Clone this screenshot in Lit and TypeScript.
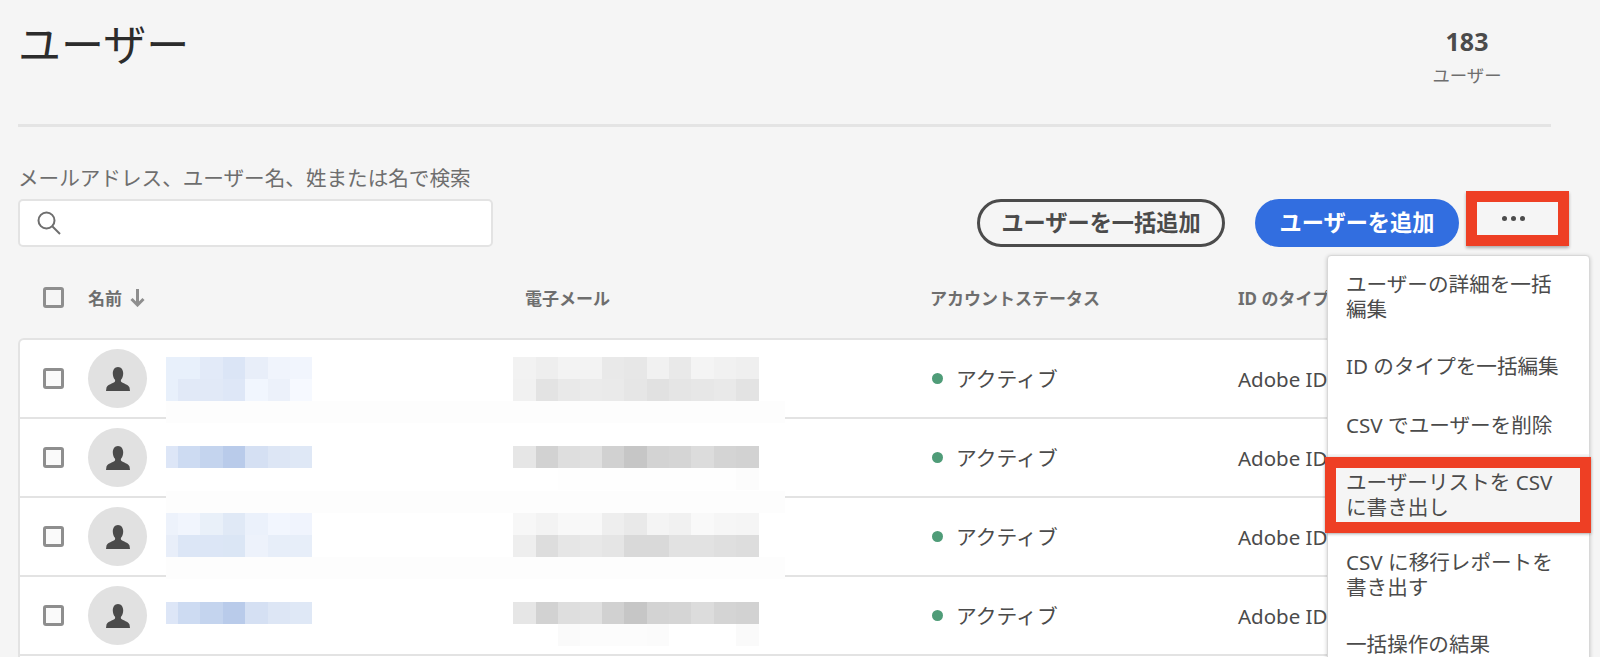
import { LitElement, html, css, svg } from "lit";
import { customElement } from "lit/decorators.js";

type Row = { offset: number; name: string[][]; mail: string[][] };

const NAME_W = [12, 22, 23, 22, 23, 22, 22];
const MAIL_W = [23, 22, 22, 22, 22, 23, 22, 22, 23, 22, 23];

const rows: Row[] = [
  {
    offset: 17,
    name: [
      ["e8f0fb", "e8f0fb", "e2eaf8", "dbe5f6", "e8eef9", "f0f4fc", "f1f5fd"],
      ["e8f0fb", "e1e9f7", "e1e9f7", "dee7f7", "f1f6fe", "ecf1fa", "f6f9ff"],
    ],
    mail: [
      ["f2f2f2", "eeeeee", "f3f3f3", "f3f3f3", "e9e9e9", "e7e7e7", "f1f1f1", "e9e9e9", "f4f4f4", "f1f1f1", "efefef"],
      ["f1f1f1", "e3e3e3", "e9e9e9", "ebebeb", "eaeaea", "e6e6e6", "e1e1e1", "e5e5e5", "e7e7e7", "e9e9e9", "e3e3e3"],
    ],
  },
  {
    offset: 27,
    name: [["dde6f7", "cddbf2", "c4d4ee", "b9cbea", "d5e0f3", "dde6f5", "dfe8f6"]],
    mail: [
      ["e6e6e6", "d2d2d2", "dedede", "e0e0e0", "d1d1d1", "c6c6c6", "d3d3d3", "d5d5d5", "dcdcdc", "d4d4d4", "d2d2d2"],
      ["ffffff", "ffffff", "fefefe", "fefefe", "fefefe", "fefefe", "fefefe", "fefefe", "fefefe", "fefefe", "fcfcfc"],
    ],
  },
  {
    offset: 15,
    name: [
      ["edf2fb", "f1f5fd", "e9f0f9", "e0e9f6", "ebf1fb", "f2f6fe", "f0f4fd"],
      ["e8eef9", "dce6f6", "dce6f6", "dbe6f5", "edf2fb", "e7eef9", "e7eef9"],
    ],
    mail: [
      ["f7f7f7", "f3f3f3", "f8f8f8", "f8f8f8", "eeeeee", "e9e9e9", "f4f4f4", "f1f1f1", "f9f9f9", "f6f6f6", "f5f5f5"],
      ["eeeeee", "dddddd", "e6e6e6", "e8e8e8", "e5e5e5", "d9d9d9", "d9d9d9", "e2e2e2", "e2e2e2", "dfdfdf", "dddddd"],
    ],
  },
  {
    offset: 25,
    name: [["dde6f7", "cddbf2", "c4d4ee", "b9cbea", "d5e0f3", "dde6f5", "dfe8f6"]],
    mail: [
      ["e6e6e6", "d2d2d2", "dedede", "e0e0e0", "d1d1d1", "c6c6c6", "d3d3d3", "d5d5d5", "dcdcdc", "d4d4d4", "d2d2d2"],
      ["ffffff", "ffffff", "fafafa", "fcfcfc", "fcfcfc", "fcfcfc", "fbfbfb", "ffffff", "ffffff", "ffffff", "fafafa"],
    ],
  },
];

const BANDS = [
  { top: 401, height: 22 },
  { top: 491, height: 22 },
  { top: 557, height: 22 },
];

const person = svg`<path d="M12 0c-3.2 0-5.200 2.800-5.200 6.400 0 2.600.9 4.700 2 6.200.5.700.5 1.900-.2 2.500C7 16.600 1.600 17.600.5 20.600L0 24h24l-.5-3.400c-1.100-3-6.500-4-8.100-5.500-.7-.6-.7-1.800-.2-2.500 1.100-1.500 2-3.600 2-6.200C17.200 2.800 15.200 0 12 0z"/>`;

@customElement("app-root")
export class AppRoot extends LitElement {
  static styles = css`
    :host {
      display: block;
      position: relative;
      width: 1600px;
      height: 657px;
      overflow: hidden;
      background: #f5f5f5;
      color: #4b4b4b;
      font-family: "Noto Sans", "Noto Sans CJK JP", sans-serif;
    }
    .page {
      display: flex;
      flex-direction: column;
      padding-left: 18px;
    }
    .head {
      width: 1533px;
      height: 124px;
      display: flex;
      justify-content: space-between;
      box-sizing: border-box;
    }
    h1 {
      margin: 16px 0 0;
      font-size: 43px;
      line-height: 58px;
      font-weight: 400;
      color: #2c2c2c;
    }
    .stat {
      width: 70px;
      margin-right: 49px;
      padding-top: 25px;
      text-align: center;
    }
    .stat b {
      display: block;
      font-size: 25px;
      line-height: 32px;
      font-weight: 700;
    }
    .stat span {
      display: block;
      margin-top: 6px;
      font-size: 17.400px;
      line-height: 24px;
      color: #6e6e6e;
      white-space: nowrap;
    }
    .rule {
      width: 1533px;
      height: 3px;
      background: #e4e4e4;
    }
    .toolbar {
      display: flex;
      align-items: flex-end;
      padding: 39px 31px 0 0;
    }
    .search {
      width: 475px;
    }
    .search label {
      display: block;
      margin-bottom: 9px;
      font-size: 20.600px;
      line-height: 24px;
      color: #6e6e6e;
      white-space: nowrap;
    }
    .input {
      box-sizing: border-box;
      height: 48px;
      display: flex;
      align-items: center;
      padding-left: 17px;
      background: #fff;
      border: 2px solid #e3e3e3;
      border-radius: 5px;
    }
    .input svg {
      width: 24px;
      height: 24px;
      fill: none;
      stroke: #6e6e6e;
      stroke-width: 2;
    }
    .actions {
      margin-left: auto;
      display: flex;
      align-items: flex-end;
    }
    .btn {
      box-sizing: border-box;
      height: 48px;
      border-radius: 24px;
      font-family: inherit;
      font-size: 22.200px;
      font-weight: 700;
      line-height: 1;
      padding: 0;
      white-space: nowrap;
    }
    .btn.outline {
      width: 248px;
      border: 3px solid #4b4b4b;
      background: transparent;
      color: #4b4b4b;
    }
    .btn.primary {
      width: 204px;
      margin-left: 30px;
      border: 0;
      background: #326ee0;
      color: #fff;
    }
    .more {
      box-sizing: border-box;
      width: 103px;
      height: 55px;
      margin: 0 0 1px 7px;
      padding-right: 8px;
      display: flex;
      align-items: center;
      justify-content: center;
      gap: 4px;
      border: 11px solid #ee3f24;
      box-shadow: 0 2px 3px rgba(0, 0, 0, 0.3);
    }
    .more i {
      width: 5px;
      height: 5px;
      border-radius: 50%;
      background: #4b4b4b;
    }
    .cols {
      display: grid;
      grid-template-columns: 45px 437px 405px 308px 1fr;
      align-items: center;
    }
    .thead {
      box-sizing: border-box;
      height: 91px;
      padding: 10px 0 0 25px;
      width: 1533px;
      font-size: 17px;
      font-weight: 700;
      color: #6e6e6e;
      white-space: nowrap;
    }
    .sort {
      display: flex;
      align-items: center;
      gap: 8px;
    }
    .sort svg {
      width: 15px;
      height: 19px;
      fill: none;
      stroke: #8e8e8e;
      stroke-width: 3;
    }
    .check {
      box-sizing: border-box;
      width: 21px;
      height: 21px;
      border: 3px solid #8e8e8e;
      border-radius: 3px;
      background: #fafafa;
    }
    .thead .check {
      background: transparent;
    }
    .card {
      width: 1533px;
      box-sizing: border-box;
      background: #fff;
      border: solid #e3e3e3;
      border-width: 2px 2px 0;
      border-radius: 6px 6px 0 0;
    }
    .row {
      box-sizing: border-box;
      height: 79px;
      padding-left: 23px;
      border-bottom: 2px solid #e3e3e3;
    }
    .person {
      display: flex;
      align-items: center;
      height: 77px;
    }
    .avatar {
      flex: none;
      width: 59px;
      height: 59px;
      border-radius: 50%;
      background: #e1e1e1;
      display: flex;
      align-items: center;
      justify-content: center;
    }
    .avatar svg {
      width: 24px;
      height: 24px;
      fill: #4b4b4b;
    }
    .mosaic {
      align-self: start;
      display: flex;
      flex-direction: column;
    }
    .person .mosaic {
      margin-left: 19px;
    }
    .mail {
      height: 77px;
      margin-left: -12px;
    }
    .strip {
      display: flex;
      height: 22px;
    }
    .strip span {
      display: block;
      height: 22px;
    }
    .status {
      display: flex;
      align-items: center;
      padding-left: 2px;
      font-size: 20.800px;
      line-height: 28px;
      white-space: nowrap;
    }
    .status i {
      width: 11px;
      height: 11px;
      margin-right: 13px;
      border-radius: 50%;
      background: #4f9c78;
    }
    .idtype {
      font-size: 20.500px;
      line-height: 28px;
      white-space: nowrap;
    }
    .band {
      position: absolute;
      left: 166px;
      width: 619px;
      background: #fdfdfd;
    }
    .menu {
      position: absolute;
      left: 1327px;
      top: 255px;
      width: 263px;
      height: 420px;
      box-sizing: border-box;
      background: #fff;
      border: 1px solid #d8d8d8;
      border-radius: 4px;
      box-shadow: 0 1px 4px rgba(0, 0, 0, 0.2);
      font-size: 20.600px;
      line-height: 25px;
      color: #4b4b4b;
    }
    .item {
      position: relative;
      padding: 16px 30px 16px 18px;
    }
    .item.loose {
      padding-bottom: 18px;
    }
    .item.hot {
      padding-bottom: 14px;
      background: #f5f5f5;
    }
    .item.hot::after {
      content: "";
      position: absolute;
      left: -3px;
      right: -2px;
      top: 3px;
      bottom: 1px;
      border: 11px solid #ee3f24;
      box-shadow: 0 1px 3px rgba(0, 0, 0, 0.3);
    }
  `;

  private mosaic(lines: string[][], widths: number[], offset: number) {
    return html`<div class="mosaic" style="margin-top:${offset}px">
      ${lines.map(
        (line) => html`<div class="strip">
          ${line.map(
            (c, i) => html`<span style="width:${widths[i]}px;background:#${c}"></span>`
          )}
        </div>`
      )}
    </div>`;
  }

  render() {
    return html`
      <div class="page">
        <header class="head">
          <h1>ユーザー</h1>
          <div class="stat"><b>183</b><span>ユーザー</span></div>
        </header>
        <div class="rule"></div>
        <div class="toolbar">
          <div class="search">
            <label>メールアドレス、ユーザー名、姓または名で検索</label>
            <div class="input">
              <svg viewBox="0 0 24 24"><circle cx="9.500" cy="9.500" r="8"></circle><path d="M15.500 15.500 23 23"></path></svg>
            </div>
          </div>
          <div class="actions">
            <button class="btn outline">ユーザーを一括追加</button>
            <button class="btn primary">ユーザーを追加</button>
            <div class="more"><i></i><i></i><i></i></div>
          </div>
        </div>
        <div class="thead cols">
          <div class="check"></div>
          <div class="sort">
            <span>名前</span>
            <svg viewBox="0 0 15 19"><path d="M7.500 1v16M1.500 11l6 6 6-6"></path></svg>
          </div>
          <div>電子メール</div>
          <div>アカウントステータス</div>
          <div>ID のタイプ</div>
        </div>
        <div class="card">
          ${rows.map(
            (r) => html`<div class="row cols">
              <div class="check"></div>
              <div class="person">
                <div class="avatar"><svg viewBox="0 0 24 24">${person}</svg></div>
                ${this.mosaic(r.name, NAME_W, r.offset)}
              </div>
              <div class="mail">${this.mosaic(r.mail, MAIL_W, r.offset)}</div>
              <div class="status"><i></i>アクティブ</div>
              <div class="idtype">Adobe ID</div>
            </div>`
          )}
          <div class="row cols"></div>
        </div>
      </div>
      ${BANDS.map(
        (b) => html`<div class="band" style="top:${b.top}px;height:${b.height}px"></div>`
      )}
      <div class="menu">
        <div class="item">ユーザーの詳細を一括編集</div>
        <div class="item loose">ID のタイプを一括編集</div>
        <div class="item">CSV でユーザーを削除</div>
        <div class="item hot">ユーザーリストを CSV<br />に書き出し</div>
        <div class="item">CSV に移行レポートを<br />書き出す</div>
        <div class="item">一括操作の結果</div>
      </div>
    `;
  }
}
